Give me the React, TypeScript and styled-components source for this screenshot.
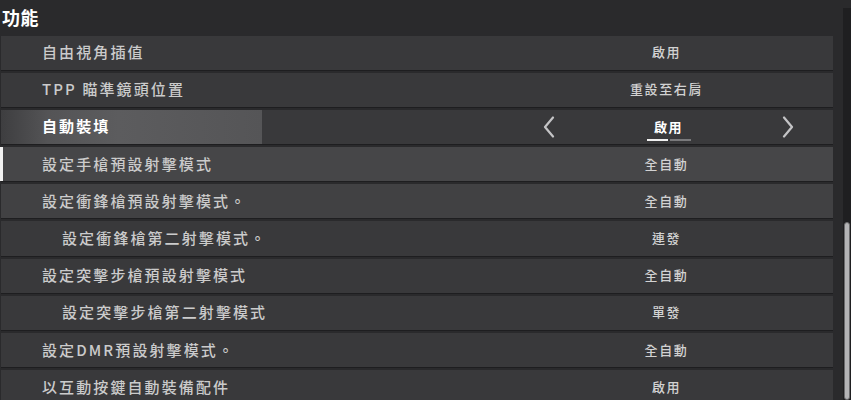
import React from "react";
import styled, { createGlobalStyle } from "styled-components";

const Global = createGlobalStyle`
  html, body { margin: 0; padding: 0; background: #2a2a2c; }
  body { font-family: "Noto Sans CJK TC", "Noto Sans", sans-serif; }
`;

const Screen = styled.div`
  width: 851px;
  height: 400px;
  overflow: hidden;
  display: flex;
  align-items: flex-start;
  background: #2a2a2c;
`;

const Main = styled.div`
  width: 833px;
  flex: none;
  display: flex;
  flex-direction: column;
`;

const Header = styled.div`
  height: 35.5px;
  flex: none;
  display: flex;
  align-items: center;
  padding-left: 2px;
  padding-bottom: 2px;
  box-sizing: border-box;
  color: #ffffff;
  font-size: 18px;
  font-weight: 700;
  letter-spacing: 0.5px;
`;

const List = styled.div`
  flex: none;
  display: flex;
  flex-direction: column;
  gap: 3px;
  padding-left: 1px;
`;

type Tone = "normal" | "active" | "hover" | "soft";

const Row = styled.div<{ $tone: Tone }>`
  position: relative;
  height: 34.2px;
  flex: none;
  display: flex;
  align-items: stretch;
  background: ${(p) =>
    p.$tone === "hover" ? "#464648" : p.$tone === "soft" ? "#414143" : "#39393b"};
  box-shadow: 0 1px 0 #1e1e20;
`;

const Indicator = styled.span`
  position: absolute;
  left: -1px;
  top: 0;
  bottom: 0;
  width: 3px;
  background: #f2f2f2;
`;

const Label = styled.div<{ $indent: boolean; $active: boolean }>`
  flex: 1;
  display: flex;
  align-items: center;
  padding-left: ${(p) => (p.$indent ? 61 : 41)}px;
  padding-bottom: 2px;
  font-size: 15px;
  letter-spacing: 2.1px;
  color: ${(p) => (p.$active ? "#ffffff" : "#cbcbcb")};
  font-weight: ${(p) => (p.$active ? 700 : 500)};
  white-space: nowrap;
`;

const ActiveLabel = styled(Label)`
  flex: none;
  width: 261px;
  box-sizing: border-box;
  background: linear-gradient(90deg, #3e3e40 0%, #545456 18%, #5c5c5e 45%, #555557 100%);
`;

const Spacer = styled.div`
  flex: 1;
`;

const Value = styled.div`
  width: 333px;
  flex: none;
  display: flex;
  align-items: center;
  justify-content: center;
  padding-bottom: 2px;
  font-size: 13px;
  letter-spacing: 1.6px;
  color: #d2d2d2;
  font-weight: 500;
`;

const Selector = styled.div`
  width: 333px;
  flex: none;
  display: flex;
  align-items: center;
  justify-content: space-between;
  padding: 0 39px 0 43px;
  box-sizing: border-box;
`;

const SelectorValue = styled.div`
  display: flex;
  flex-direction: column;
  align-items: center;
  padding-top: 5px;
  gap: 3px;
  color: #ffffff;
  font-size: 13px;
  font-weight: 700;
  letter-spacing: 1.6px;
`;

const Dots = styled.div`
  display: flex;
  gap: 2px;
`;

const Dash = styled.span<{ $on: boolean }>`
  width: 21px;
  height: 2px;
  background: ${(p) => (p.$on ? "#f0f0f0" : "#7a7a7c")};
`;

const Arrow = styled.svg`
  width: 12px;
  height: 22px;
  display: block;
`;

const Track = styled.div`
  position: relative;
  flex: none;
  margin-left: 10px;
  margin-top: 8px;
  width: 8px;
  height: 392px;
  background: #1f1f21;
`;

const Thumb = styled.div`
  position: absolute;
  left: 1px;
  top: 214px;
  width: 4px;
  height: 176px;
  border-radius: 3px;
  background: #b4b4b6;
  border: 1px solid #6a6a6c;
`;

type Item = { label: string; value: string; indent?: boolean; tone?: Tone };

const items: Item[] = [
  { label: "自由視角插值", value: "啟用" },
  { label: "TPP 瞄準鏡頭位置", value: "重設至右肩" },
  { label: "自動裝填", value: "啟用", tone: "active" },
  { label: "設定手槍預設射擊模式", value: "全自動", tone: "hover" },
  { label: "設定衝鋒槍預設射擊模式。", value: "全自動", tone: "soft" },
  { label: "設定衝鋒槍第二射擊模式。", value: "連發", indent: true },
  { label: "設定突擊步槍預設射擊模式", value: "全自動" },
  { label: "設定突擊步槍第二射擊模式", value: "單發", indent: true },
  { label: "設定DMR預設射擊模式。", value: "全自動" },
  { label: "以互動按鍵自動裝備配件", value: "啟用" },
];

const Chevron = ({ dir }: { dir: "left" | "right" }) => (
  <Arrow viewBox="0 0 12 22">
    <path
      d={dir === "left" ? "M10 1.5 L2 11 L10 20.5" : "M2 1.5 L10 11 L2 20.5"}
      fill="none"
      stroke="#c4c4c6"
      strokeWidth="2.2"
      strokeLinecap="round"
      strokeLinejoin="round"
    />
  </Arrow>
);

export default function App() {
  return (
    <Screen>
      <Global />
      <Main>
        <Header>功能</Header>
        <List>
          {items.map((it, i) => {
            const tone = it.tone ?? "normal";
            if (tone === "active") {
              return (
                <Row key={i} $tone="normal">
                  <ActiveLabel $indent={false} $active>
                    {it.label}
                  </ActiveLabel>
                  <Spacer />
                  <Selector>
                    <Chevron dir="left" />
                    <SelectorValue>
                      <span>{it.value}</span>
                      <Dots>
                        <Dash $on />
                        <Dash $on={false} />
                      </Dots>
                    </SelectorValue>
                    <Chevron dir="right" />
                  </Selector>
                </Row>
              );
            }
            return (
              <Row key={i} $tone={tone}>
                {tone === "hover" && <Indicator />}
                <Label $indent={!!it.indent} $active={false}>
                  {it.label}
                </Label>
                <Value>{it.value}</Value>
              </Row>
            );
          })}
        </List>
      </Main>
      <Track>
        <Thumb />
      </Track>
    </Screen>
  );
}
